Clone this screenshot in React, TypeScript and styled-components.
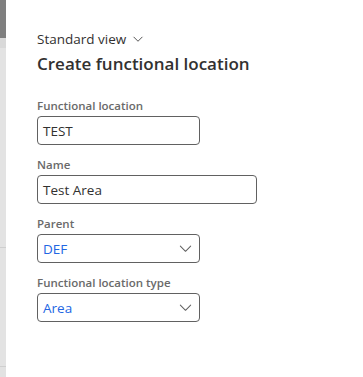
import React from "react";
import styled, { createGlobalStyle } from "styled-components";

const Global = createGlobalStyle`
  html, body { margin: 0; padding: 0; background: #ffffff; }
  body { font-family: "Open Sans", "Noto Sans", "Liberation Sans", sans-serif; }
  #root { height: 377px; }
`;

const Page = styled.div`
  display: flex;
  height: 377px;
  width: 363px;
  overflow: hidden;
  background: #ffffff;
`;

const Strip = styled.div`
  width: 6px;
  display: flex;
  flex-direction: column;
  flex-shrink: 0;
  background: #e2e2e2;
`;

const StripPart = styled.div<{ $h: number; $c: string; $line?: boolean }>`
  height: ${(p) => p.$h}px;
  flex-shrink: 0;
  background: ${(p) => p.$c};
  border-bottom: ${(p) => (p.$line ? "1px solid #cfcfcf" : "none")};
`;

const Panel = styled.div`
  flex: 1;
  padding: 29px 0 0 31px;
  display: flex;
  flex-direction: column;
  color: #323130;
`;

const ViewSwitch = styled.div`
  display: flex;
  align-items: center;
  gap: 6px;
  font-size: 13.5px;
  line-height: 20px;
  color: #323130;
`;

const Title = styled.h1`
  margin: 3px 0 0 0;
  font-size: 17px;
  line-height: 24px;
  font-weight: 600;
  color: #323130;
`;

const Form = styled.div`
  margin-top: 22px;
  display: flex;
  flex-direction: column;
  gap: 12px;
`;

const Field = styled.div`
  display: flex;
  flex-direction: column;
  gap: 2px;
`;

const Label = styled.label`
  font-size: 11.5px;
  line-height: 16px;
  font-weight: 600;
  color: #6a6a6a;
`;

const Box = styled.div<{ $w: number }>`
  box-sizing: border-box;
  width: ${(p) => p.$w}px;
  height: 29px;
  border: 1px solid #616161;
  border-radius: 4px;
  display: flex;
  align-items: center;
  padding: 0 6px 0 5px;
  font-size: 13.5px;
  color: #323130;
`;

const Value = styled.span<{ $link?: boolean }>`
  flex: 1;
  color: ${(p) => (p.$link ? "#2266e3" : "#323130")};
`;

const Chevron = ({ size = 14, color = "#616161" }: { size?: number; color?: string }) => (
  <svg width={size} height={size} viewBox="0 0 16 16" fill="none">
    <path d="M2.5 5.5 L8 11 L13.5 5.5" stroke={color} strokeWidth="1.1" strokeLinecap="round" strokeLinejoin="round" />
  </svg>
);

export default function App() {
  return (
    <>
      <Global />
      <Page>
        <Strip>
          <StripPart $h={38} $c="#7f7f7f" />
          <StripPart $h={10} $c="#d9d9d9" />
          <StripPart $h={199} $c="#e3e3e3" $line />
          <StripPart $h={118} $c="#e3e3e3" $line />
        </Strip>
        <Panel>
          <ViewSwitch>
            Standard view
            <Chevron size={12} color="#323130" />
          </ViewSwitch>
          <Title>Create functional location</Title>
          <Form>
            <Field>
              <Label>Functional location</Label>
              <Box $w={163}>
                <Value>TEST</Value>
              </Box>
            </Field>
            <Field>
              <Label>Name</Label>
              <Box $w={220}>
                <Value>Test Area</Value>
              </Box>
            </Field>
            <Field>
              <Label>Parent</Label>
              <Box $w={163}>
                <Value $link>DEF</Value>
                <Chevron size={15} />
              </Box>
            </Field>
            <Field>
              <Label>Functional location type</Label>
              <Box $w={163}>
                <Value $link>Area</Value>
                <Chevron size={15} />
              </Box>
            </Field>
          </Form>
        </Panel>
      </Page>
    </>
  );
}
